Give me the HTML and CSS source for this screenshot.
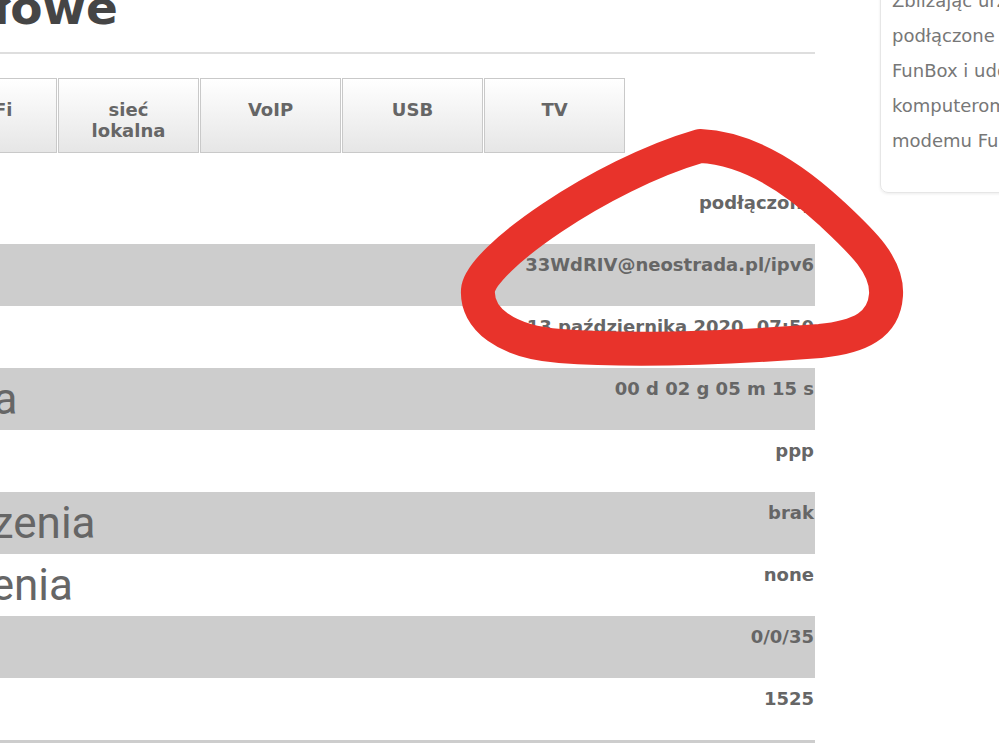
FILE: index.html
```html
<!DOCTYPE html>
<html lang="pl">
<head>
    <meta charset="UTF-8">
    <meta name="viewport" content="width=device-width, initial-scale=1.0">
    <title>Internet - dane szczegółowe</title>
    <link rel="stylesheet" href="styles.css">
</head>
<body>

<div class="page">
    <div class="main">
        <h1>Dane szczegółowe</h1>

        <div class="tabs">
            <div class="tab">stan</div>
            <div class="tab">Internet</div>
            <div class="tab">Wi-Fi</div>
            <div class="tab">sieć<br>lokalna</div>
            <div class="tab">VoIP</div>
            <div class="tab">USB</div>
            <div class="tab">TV</div>
        </div>

        <div class="details">
            <div class="row">
                <span class="label">Stan</span>
                <span class="value">podłączony</span>
            </div>
            <div class="row">
                <span class="label">Login</span>
                <span class="value">33WdRIV@neostrada.pl/ipv6</span>
            </div>
            <div class="row">
                <span class="label">Połączono</span>
                <span class="value">13 października 2020, 07:50</span>
            </div>
            <div class="row">
                <span class="label">Czas zalogowania</span>
                <span class="value">00 d 02 g 05 m 15 s</span>
            </div>
            <div class="row">
                <span class="label">Protokół</span>
                <span class="value">ppp</span>
            </div>
            <div class="row">
                <span class="label">Przyczyna rozłączenia</span>
                <span class="value">brak</span>
            </div>
            <div class="row">
                <span class="label">Tryb uwierzytelnienia</span>
                <span class="value">none</span>
            </div>
            <div class="row">
                <span class="label">VPI/VCI</span>
                <span class="value">0/0/35</span>
            </div>
            <div class="row">
                <span class="label">MTU</span>
                <span class="value">1525</span>
            </div>
            <div class="row">
                <span class="label">MRU</span>
                <span class="value">1492</span>
            </div>
        </div>
    </div>

    <div class="aside">
        <p class="help">
            Zbliżając urządzenia<br>
            podłączone do modemu<br>
            FunBox i udostępniając je<br>
            komputerom w sieci<br>
            modemu FunBox.
        </p>
    </div>
</div>

<svg class="scribble" viewBox="0 0 999 743" width="999" height="743">
    <path d="M 700 146 C 745 148, 790 175, 830 212 C 860 240, 888 265, 886 295 C 884 325, 860 337, 820 341 C 740 347, 640 352, 560 346 C 505 342, 476 318, 478 290 C 480 260, 600 175, 700 146 Z"
          fill="none" stroke="#e8332b" stroke-width="34" stroke-linejoin="round" stroke-linecap="round"/>
</svg>

</body>
</html>
```

FILE: styles.css
```css
html, body {
    margin: 0;
    overflow: hidden;
}
body {
    position: relative;
    width: 999px;
    height: 743px;
    background-color: white;
    font-family: "DejaVu Sans", Roboto, sans-serif;
    color: #666;
}
.page {
    display: flex;
    align-items: flex-start;
    margin: -20px 0 0 -368px;
}
.main {
    flex: none;
    width: 1183px;
}
h1 {
    margin: 0;
    padding-bottom: 16px;
    border-bottom: 2px solid #dedede;
    font-size: 47px;
    line-height: 56px;
    font-weight: bold;
    color: #454545;
}
.tabs {
    display: flex;
    margin-top: 24px;
}
.tab {
    box-sizing: border-box;
    width: 141px;
    height: 75px;
    margin-right: 1px;
    padding-top: 20px;
    border: 1px solid #c9c9c9;
    background: linear-gradient(#ffffff, #e6e6e6);
    text-align: center;
    font-size: 18px;
    line-height: 21px;
    font-weight: bold;
    color: #666;
}
.details {
    margin-top: 29px;
}
.row {
    display: flex;
    justify-content: space-between;
    height: 62px;
}
.row:nth-child(even) {
    background-color: #cdcdcd;
}
.label {
    align-self: center;
    padding-left: 30px;
    font-family: Roboto, sans-serif;
    font-size: 44px;
    line-height: 44px;
    color: #666;
    white-space: nowrap;
}
.value {
    padding: 10px 1px 0 0;
    font-size: 18px;
    line-height: 22px;
    font-weight: bold;
    color: #666;
    white-space: nowrap;
}
.aside {
    flex: none;
    width: 280px;
    margin: -18px 0 0 65px;
    box-sizing: border-box;
    padding: 20px 11px 34px;
    border: 1px solid #e6e6e6;
    border-radius: 8px;
    box-shadow: 0 1px 3px rgba(0, 0, 0, 0.08);
}
.help {
    margin: 0;
    font-size: 18px;
    line-height: 35px;
    color: #777;
    white-space: nowrap;
}
.scribble {
    position: absolute;
    top: 0;
    left: 0;
    pointer-events: none;
}
```
